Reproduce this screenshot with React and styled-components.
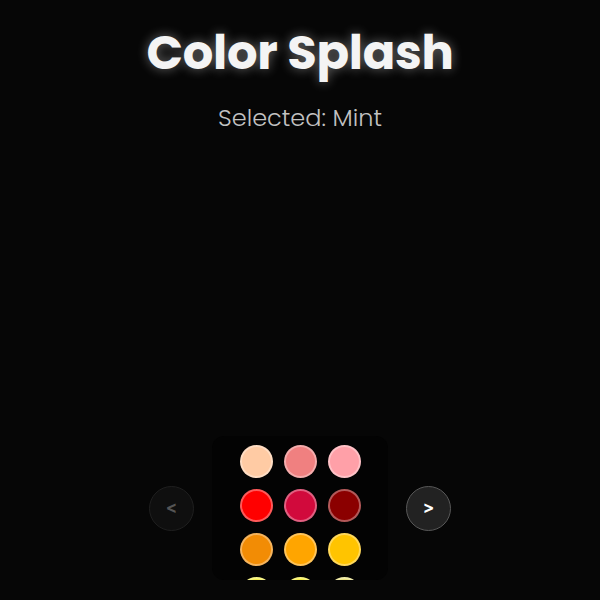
import styled, { createGlobalStyle } from 'styled-components'

const GlobalStyle = createGlobalStyle`
  html, body {
    margin: 0;
    padding: 0;
    background: #060606;
  }
  body {
    font-family: 'Poppins', 'Inter', 'Noto Sans', sans-serif;
    color: #fff;
  }
`

const colors = [
  '#ffcba4', '#f08080', '#ffa0a8',
  '#ff0000', '#d10a3c', '#8b0000',
  '#f28c05', '#ffa500', '#ffc400',
  '#f5f04a', '#f7ef3c', '#e9e07a',
  '#98ff98', '#7fffd4', '#40e0d0',
]

export default function App() {
  return (
    <Page>
      <GlobalStyle />
      <Title>Color Splash</Title>
      <Subtitle>Selected: Mint</Subtitle>
      <Carousel>
        <NavButton disabled>&lt;</NavButton>
        <Palette>
          <Grid>
            {colors.map((c) => (
              <Swatch key={c} $color={c} />
            ))}
          </Grid>
        </Palette>
        <NavButton $active>&gt;</NavButton>
      </Carousel>
    </Page>
  )
}

const Page = styled.div`
  min-height: 100vh;
  display: flex;
  flex-direction: column;
  align-items: center;
  overflow: hidden;
`

const Title = styled.h1`
  margin: 24px 0 0;
  font-size: 48px;
  font-weight: 700;
  line-height: 1.2;
  letter-spacing: -0.3px;
  color: #f4f4f4;
  text-shadow: 0 0 12px rgba(255, 255, 255, 0.4);
`

const Subtitle = styled.p`
  margin: 22px 0 0;
  font-size: 24px;
  font-weight: 300;
  line-height: 1.2;
  color: #c2c2c2;
`

const Carousel = styled.div`
  margin-top: 304px;
  display: flex;
  align-items: center;
  gap: 18px;
`

const NavButton = styled.button`
  width: 45px;
  height: 45px;
  border-radius: 50%;
  display: flex;
  align-items: center;
  justify-content: center;
  padding: 0 0 2px;
  font-family: 'Inter', sans-serif;
  font-size: 17px;
  font-weight: 700;
  background: ${(p) => (p.$active ? '#222' : '#0f0f0f')};
  border: 1.5px solid ${(p) => (p.$active ? '#585858' : '#1f1f1f')};
  color: ${(p) => (p.$active ? '#fff' : '#555')};
`

const Palette = styled.div`
  width: 176px;
  height: 144px;
  border-radius: 12px;
  background: #030303;
  overflow: hidden;
  display: flex;
  justify-content: center;
`

const Grid = styled.div`
  padding-top: 9px;
  display: grid;
  grid-template-columns: repeat(3, 33px);
  grid-auto-rows: 33px;
  gap: 11px;
`

const Swatch = styled.div`
  border-radius: 50%;
  background: ${(p) => p.$color};
  border: 2px solid rgba(255, 255, 255, 0.35);
  box-sizing: border-box;
`
